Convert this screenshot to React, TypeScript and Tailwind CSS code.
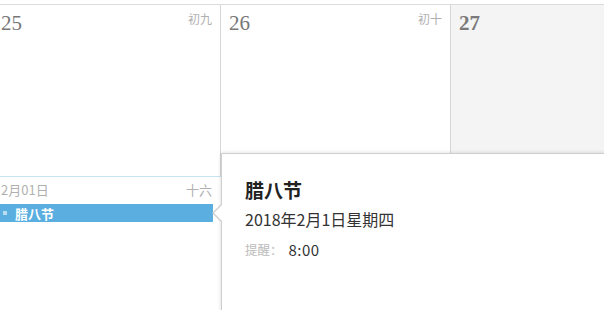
export default function App() {
  const cjk = { fontFamily: '"Noto Sans CJK SC", "Noto Sans", sans-serif' };
  const serif = { fontFamily: '"Liberation Serif", "DejaVu Serif", serif' };

  return (
    <div className="relative w-[604px] h-[310px] overflow-hidden bg-white" style={cjk}>
      {/* week row */}
      <div className="mt-[4px] grid grid-cols-[221px_230px_1fr] h-[150px] border-t border-[#dcdcdc]">
        <div className="relative border-r border-[#d6d6d6]">
          <span className="absolute left-[1px] top-[3px] text-[21px] text-[#777]" style={serif}>25</span>
          <span className="absolute right-[8px] top-[5px] text-[12px] text-[#b0b0b0]">初九</span>
        </div>
        <div className="relative border-r border-[#d6d6d6]">
          <span className="absolute left-[8px] top-[3px] text-[21px] text-[#777]" style={serif}>26</span>
          <span className="absolute right-[8px] top-[5px] text-[12px] text-[#b0b0b0]">初十</span>
        </div>
        <div className="relative bg-[#f4f4f4]">
          <span className="absolute left-[8px] top-[3px] text-[21px] font-bold text-[#7a7a7a]" style={serif}>27</span>
        </div>
      </div>

      {/* day detail column */}
      <div className="w-[221px]">
        <div className="h-[22px] border-r border-[#d6d6d6]" />
        <div className="border-t border-[#c6e3f0]">
          <div className="flex justify-between items-center h-[25px] pl-[1px] pr-[9px] text-[13px] text-[#b0b0b0]">
            <span>2月01日</span>
            <span>十六</span>
          </div>
          <div className="mt-[2px] w-[213px] h-[18px] bg-[#5aaee0] flex items-center">
            <span className="ml-[3px] w-[4px] h-[4px] bg-[#b9dcef]" />
            <span className="ml-[8px] text-[13px] font-bold leading-none text-white">腊八节</span>
          </div>
        </div>
      </div>

      {/* popup */}
      <div className="absolute left-[221px] top-[153px] w-[400px] h-[200px] bg-white border border-[#cfcfcf] shadow-[0_0_4px_rgba(0,0,0,0.15)]">
        <div className="absolute -left-[10px] top-[49px] w-0 h-0 border-y-[10px] border-y-transparent border-r-[10px] border-r-[#cfcfcf]" />
        <div className="absolute -left-[8px] top-[50px] w-0 h-0 border-y-[9px] border-y-transparent border-r-[9px] border-r-white" />
        <div className="pl-[23px] pt-[24px]">
          <div className="text-[19px] font-bold leading-[24px] text-[#222]">腊八节</div>
          <div className="mt-[6px] text-[16px] leading-[22px] text-[#333]">2018年2月1日星期四</div>
          <div className="mt-[9px] flex items-center leading-[22px]">
            <span className="text-[12.5px] text-[#bbbbbb]">提醒：</span>
            <span className="ml-[6px] text-[15px] tracking-[0.5px] text-[#333]">8:00</span>
          </div>
        </div>
      </div>
    </div>
  );
}
